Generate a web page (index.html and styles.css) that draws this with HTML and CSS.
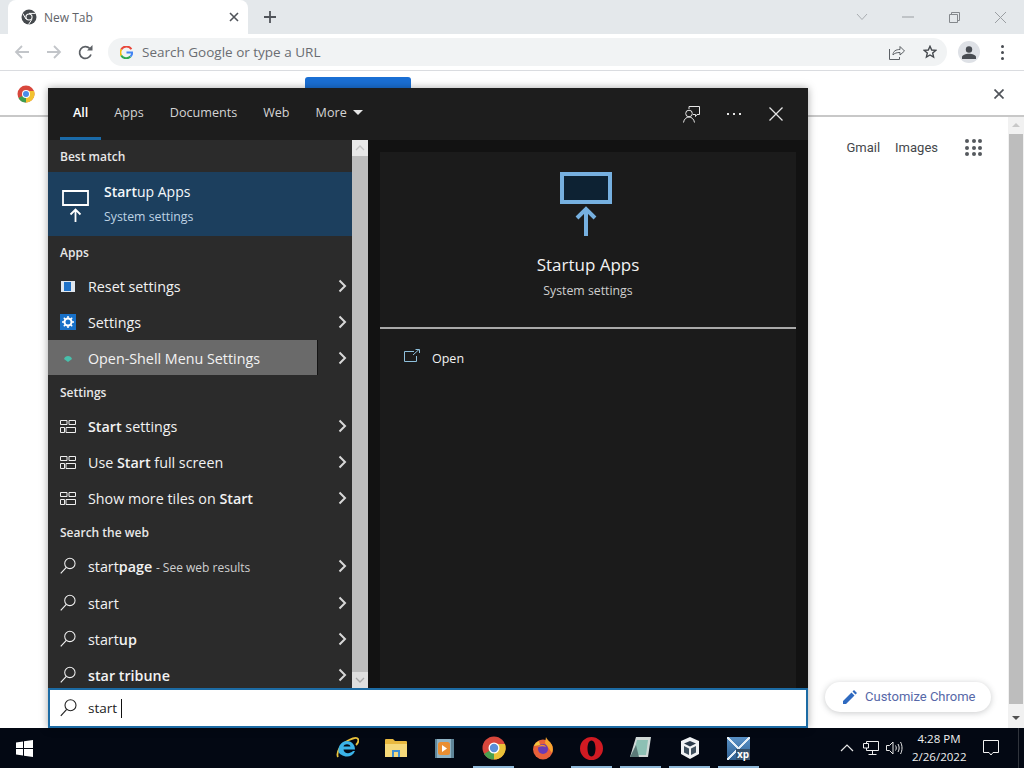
FILE: index.html
```html
<!DOCTYPE html>
<html lang="en">
<head>
    <meta charset="UTF-8">
    <title>New Tab</title>
    <link rel="stylesheet" href="styles.css">
</head>
<body>
    <svg class="defs" width="0" height="0">
        <symbol id="tiles" viewBox="0 0 16 13">
            <path d="M.5.5h6.500v4h-6.500zM9 .5h6.500v4H9zM.5 7.500h4v5h-4zM6 7.500h9.500v5H6z" fill="none" stroke="#eee"/>
        </symbol>
        <symbol id="lens" viewBox="0 0 17 18">
            <circle cx="10.500" cy="6.300" r="5.500" fill="none" stroke="currentColor" stroke-width="1.100"/>
            <path d="M6.700 10.400 .8 16.800" fill="none" stroke="currentColor" stroke-width="1.200"/>
        </symbol>
        <symbol id="chev" viewBox="0 0 9 14">
            <path d="M1.500 1.500 7 7l-5.500 5.500" fill="none" stroke="#d8d8d8" stroke-width="2"/>
        </symbol>
    </svg>

    <div class="tabstrip">
        <div class="tab">
            <svg class="tab-icon" width="16" height="16" viewBox="0 0 16 16">
                <circle cx="8" cy="8" r="7.500" fill="#45494d"/>
                <circle cx="8" cy="8" r="3.600" fill="#fff"/>
                <circle cx="8" cy="8" r="2.500" fill="#45494d"/>
                <path d="M8 4.400h6.500M5 10 1.800 4.500M10.800 10.500 7.500 15.500" stroke="#fff" stroke-width="1"/>
            </svg>
            <span class="tab-title">New Tab</span>
            <svg class="tab-close" width="10" height="10" viewBox="0 0 10 10"><path d="M1 1l8 8M9 1l-8 8" stroke="#50545a" stroke-width="1.600"/></svg>
        </div>
        <svg class="new-tab" width="14" height="14" viewBox="0 0 14 14"><path d="M7 1v12M1 7h12" stroke="#50545a" stroke-width="1.800"/></svg>
        <div class="win-btns">
            <svg width="12" height="8" viewBox="0 0 12 8"><path d="M1 1l5 5.500L11 1" fill="none" stroke="#a9adb1"/></svg>
            <svg class="win-min" width="12" height="2" viewBox="0 0 12 2"><path d="M0 1h12" stroke="#9a9ea2"/></svg>
            <svg class="win-max" width="11" height="11" viewBox="0 0 11 11"><path d="M.5 2.500h8v8h-8zM2.500 2.500v-2h8v8h-2" fill="none" stroke="#84888c"/></svg>
            <svg class="win-x" width="13" height="13" viewBox="0 0 13 13"><path d="M1 1l11 11M12 1 1 12" stroke="#9a9ea2"/></svg>
        </div>
    </div>

    <div class="toolbar">
        <svg class="nav-icon" width="16" height="14" viewBox="0 0 16 14"><path d="M15 7H2M8 1 2 7l6 6" fill="none" stroke="#c2c5c9" stroke-width="1.800"/></svg>
        <svg class="nav-icon" width="16" height="14" viewBox="0 0 16 14"><path d="M1 7h13M8 1l6 6-6 6" fill="none" stroke="#c2c5c9" stroke-width="1.800"/></svg>
        <svg class="nav-icon" width="15" height="15" viewBox="0 0 15 15"><path d="M13 9.500A5.900 5.900 0 1 1 11.700 3.400" fill="none" stroke="#5c6065" stroke-width="1.700"/><path d="M9 5.500h5.500V0z" fill="#5c6065"/></svg>
        <div class="omnibox">
            <svg width="13" height="13" viewBox="0 0 13 13">
                <path d="M11.400 3.200A6 6 0 0 0 1.200 3.500" fill="none" stroke="#e8483b" stroke-width="2"/>
                <path d="M1.200 3.500a6 6 0 0 0 0 6" fill="none" stroke="#f6bb0e" stroke-width="2"/>
                <path d="M1.200 9.500a6 6 0 0 0 9.300 1" fill="none" stroke="#2da94f" stroke-width="2"/>
                <path d="M6.500 6.500h5.800a6 6 0 0 1-1.800 4" fill="none" stroke="#4285f4" stroke-width="2"/>
            </svg>
            <span class="omni-text">Search Google or type a URL</span>
            <svg class="omni-share" width="16" height="15" viewBox="0 0 16 15"><path d="M.5 4v10.500h10V12M4 10c0-4 3-5.500 7-5.500V1.500L15.500 6 11 10V7.500C8 7.500 5.500 8 4 10z" fill="none" stroke="#5c6065"/></svg>
            <svg class="omni-star" width="14" height="14" viewBox="0 0 14 14"><path d="M7 1.300 8.700 5l4 .4-3 2.700.9 4L7 10l-3.600 2.100.9-4-3-2.700 4-.4z" fill="none" stroke="#44484d" stroke-width="1.400"/></svg>
        </div>
        <div class="avatar">
            <svg width="14" height="13" viewBox="0 0 14 13"><circle cx="7" cy="3.500" r="3.200" fill="#484c52"/><path d="M0 13v-2c0-2 3.500-3.300 7-3.300s7 1.300 7 3.300v2z" fill="#484c52"/></svg>
        </div>
        <div class="menu-dots"><i></i><i></i><i></i></div>
    </div>

    <div class="infobar">
        <svg width="18" height="18" viewBox="0 0 18 18">
            <circle cx="9" cy="9" r="8.500" fill="#d8473c"/>
            <path d="M9 9 1.500 13A8.500 8.500 0 0 0 9 17.500z" fill="#3d9d4f"/>
            <path d="M9 9v8.500A8.500 8.500 0 0 0 17 6H9z" fill="#f2c230"/>
            <circle cx="9" cy="9" r="4" fill="#fff"/>
            <circle cx="9" cy="9" r="3" fill="#4a8bea"/>
        </svg>
        <div class="info-btn"></div>
        <svg class="info-close" width="10" height="10" viewBox="0 0 10 10"><path d="M.5.5l9 9M9.500.5l-9 9" stroke="#50545a" stroke-width="1.700"/></svg>
    </div>

    <div class="page">
        <div class="page-main">
            <div class="page-links">
                <span>Gmail</span>
                <span>Images</span>
                <div class="apps-grid"><i></i><i></i><i></i><i></i><i></i><i></i><i></i><i></i><i></i></div>
            </div>
            <div class="customize">
                <svg width="14" height="14" viewBox="0 0 14 14"><path d="M0 14v-3L8.500 2.500l3 3L3 14zM9.500 1.500 11 0l3 3-1.500 1.500z" fill="#2f6ac0"/></svg>
                <span>Customize Chrome</span>
            </div>
        </div>
        <div class="page-scroll">
            <div class="arrow-up"></div>
            <div class="page-thumb"></div>
            <div class="arrow-down"></div>
        </div>
    </div>

    <div class="taskbar">
        <svg class="start-logo" width="17" height="17" viewBox="0 0 17 17"><path d="M0 2.400 7 1.400v6.500H0zM8 1.200 17 0v7.900H8zM0 9h7v6.600L0 14.600zM8 9h9v8l-9-1.200z" fill="#fff"/></svg>
        <div class="task-apps">
            <div class="task-app">
                <svg width="24" height="24" viewBox="0 0 24 24">
                    <path d="M3 21C1 17 5 8 14 4c4-2 8-3 9-1 1 2-1 5-2 6" fill="none" stroke="#e9c23c" stroke-width="1.800"/>
                    <path d="M3.500 13.500C4 8 8 5 12 5s8 3 8 8.500H8.500c.3 4 6 5 9.500 1.500h2c-2 5-7 6.500-11 5S3 17 3.500 13.500zM8.500 10.500h7c-.5-3-6.500-3-7 0z" fill="#3bb3e8" fill-rule="evenodd"/>
                </svg>
            </div>
            <div class="task-app">
                <svg width="22" height="20" viewBox="0 0 22 20">
                    <path d="M1 1h7l2 2h11a1 1 0 0 1 1 1v3H0V2a1 1 0 0 1 1-1z" fill="#e9b93f"/>
                    <path d="M0 6h22v13H0z" fill="#f6d97a"/>
                    <path d="M7 12h8v7H7z" fill="#3f8fd0"/>
                    <path d="M9 14h4v5H9z" fill="#f6d97a"/>
                </svg>
            </div>
            <div class="task-app">
                <svg width="19" height="19" viewBox="0 0 19 19">
                    <path d="M0 0h19v19H0z" fill="#8eb2c4"/>
                    <path d="M0 0h2v19H0zM16 0h3v19h-3z" fill="#5f8598"/>
                    <rect x="3" y="3" width="12" height="13" rx="2.500" fill="#e98e32"/>
                    <path d="M7 6l5 3.500L7 13z" fill="#fff"/>
                </svg>
            </div>
            <div class="task-app running">
                <svg width="24" height="24" viewBox="0 0 24 24">
                    <circle cx="12" cy="12" r="11.500" fill="#d8473c"/>
                    <path d="M12 12 2 18a11.500 11.500 0 0 0 10 5.500z" fill="#48a04f"/>
                    <path d="M12 12v11.500A11.500 11.500 0 0 0 23 8H12z" fill="#eac138"/>
                    <circle cx="12" cy="12" r="5.500" fill="#fff"/>
                    <circle cx="12" cy="12" r="4.200" fill="#5a8fd8"/>
                </svg>
            </div>
            <div class="task-app">
                <svg width="24" height="24" viewBox="0 0 24 24">
                    <circle cx="12" cy="13.500" r="10" fill="#e8603a"/>
                    <path d="M15 1c1 3 4 4 6 8 1 3 1 6 0 8L14 7z" fill="#f7a52f"/>
                    <path d="M3 10c1-3 3-4 5-5l1 4z" fill="#f3c53c"/>
                    <circle cx="12" cy="13" r="5" fill="#6a3bb5"/>
                    <path d="M7 11c2-3 7-3 8 0-2-1-5-1-8 0z" fill="#f2902f"/>
                </svg>
            </div>
            <div class="task-app running">
                <svg width="23" height="23" viewBox="0 0 23 23">
                    <path d="M11.500 0a11.500 11.500 0 1 0 0 23 11.500 11.500 0 0 0 0-23zM11.500 3.500c2.600 0 4 3.600 4 8s-1.400 8-4 8-4-3.600-4-8 1.400-8 4-8z" fill="#d01a22" fill-rule="evenodd"/>
                </svg>
            </div>
            <div class="task-app running">
                <svg width="23" height="24" viewBox="0 0 23 24">
                    <path d="M7 1h15l-3 20H1z" fill="#cfd8d6"/>
                    <path d="M8 4h11l-2 15H4z" fill="#8dc0b4"/>
                    <path d="M1 21 7 9l3 12z" fill="#5a7a78"/>
                </svg>
            </div>
            <div class="task-app running">
                <svg width="22" height="24" viewBox="0 0 22 24">
                    <path d="M11 1 20 5v13l-9 5-9-5V5z" fill="#f0f2f4"/>
                    <path d="M11 5l6 2.500-6 3-6-3z" fill="#2b3a4a"/>
                    <path d="M5 10l5 2.500V19l-5-2.500zM17 10l-5 2.500V19l5-2.500z" fill="#40505e"/>
                </svg>
            </div>
            <div class="task-app running">
                <div class="xp-tile"><span>xp</span></div>
            </div>
        </div>
        <div class="tray">
            <svg width="14" height="8" viewBox="0 0 14 8"><path d="M1 7l6-6 6 6" fill="none" stroke="#e8e8e8" stroke-width="1.200"/></svg>
            <svg class="tray-net" width="16" height="14" viewBox="0 0 16 14"><path d="M3.500 2.500V.5h12v9h-12V7M.5 2.500h5v4.500h-5zM9.500 9.500v4M5.500 13.500h8" fill="none" stroke="#eee"/></svg>
            <svg class="tray-vol" width="17" height="14" viewBox="0 0 17 14"><path d="M.5 4.500h3L7 1v12L3.500 9.500h-3zM9.500 4.500c1 1.500 1 3.500 0 5M12 3c1.500 2.500 1.500 5.500 0 8M14.500 1c2 3.500 2 8.500 0 12" fill="none" stroke="#e8e8e8"/></svg>
            <div class="clock">
                <div>4:28 PM</div>
                <div>2/26/2022</div>
            </div>
            <svg class="tray-note" width="16" height="16" viewBox="0 0 16 16"><path d="M.5.500h15v12H10L8 15l-2-2.500H.5z" fill="none" stroke="#f2f2f2"/></svg>
        </div>
        <div class="show-desktop"></div>
    </div>

    <div class="search-win">
        <div class="search-head">
            <div class="search-tab active">All</div>
            <div class="search-tab">Apps</div>
            <div class="search-tab">Documents</div>
            <div class="search-tab">Web</div>
            <div class="search-tab">More <span class="caret"></span></div>
            <div class="head-icons">
                <svg width="17" height="17" viewBox="0 0 17 17"><path d="M6 3V.5h10.500v8H14l-1.500 2V8.500H10" fill="none" stroke="#e6e6e6"/><circle cx="6" cy="7.500" r="3.300" fill="none" stroke="#e6e6e6"/><path d="M.5 16.500c.5-3.500 3-5.500 5.500-5.500s5 2 5.500 5.500" fill="none" stroke="#e6e6e6"/></svg>
                <div class="more-dots"><i></i><i></i><i></i></div>
                <svg width="14" height="14" viewBox="0 0 14 14"><path d="M.5.5l13 13M13.500.5l-13 13" stroke="#e6e6e6" stroke-width="1.300"/></svg>
            </div>
        </div>
        <div class="search-body">
            <div class="results">
                <div class="group-title">Best match</div>
                <div class="best">
                    <svg width="27" height="33" viewBox="0 0 27 33"><path d="M1 1h25v14H1z" fill="none" stroke="#fff" stroke-width="1.800"/><path d="M13.500 32V20M8.500 24.500l5-5 5 5" fill="none" stroke="#fff" stroke-width="1.800"/></svg>
                    <div>
                        <div class="best-name"><b>Start</b>up Apps</div>
                        <div class="best-sub">System settings</div>
                    </div>
                </div>

                <div class="group-title">Apps</div>
                <div class="row">
                    <svg class="row-icon" width="14" height="11" viewBox="0 0 14 11"><path d="M0 0h14v11H0z" fill="#dfe6ee"/><path d="M3 1h7v9H3z" fill="#1f72c8"/></svg>
                    <span class="row-text">Reset settings</span>
                    <svg class="row-chev"><use href="#chev"/></svg>
                </div>
                <div class="row">
                    <svg class="row-icon" width="16" height="16" viewBox="0 0 16 16"><path d="M0 0h16v16H0z" fill="#1871c9"/><circle cx="8" cy="8" r="3.500" fill="none" stroke="#fff" stroke-width="2"/><path d="M8 2v2.500M8 11.500V14M2 8h2.500M11.500 8H14M3.800 3.800l1.700 1.700M10.500 10.500l1.700 1.700M12.200 3.800l-1.700 1.700M5.500 10.500l-1.700 1.700" stroke="#fff" stroke-width="1.500"/></svg>
                    <span class="row-text">Settings</span>
                    <svg class="row-chev"><use href="#chev"/></svg>
                </div>
                <div class="row row-hover">
                    <div class="hover-main">
                        <svg class="row-icon" width="16" height="10" viewBox="0 0 16 10"><path d="M4 6c1-4 7-4 8 0L8 9z" fill="#48c0ac"/></svg>
                        <span class="row-text">Open-Shell Menu Settings</span>
                    </div>
                    <svg class="row-chev"><use href="#chev"/></svg>
                </div>

                <div class="group-title">Settings</div>
                <div class="row">
                    <svg class="row-icon" width="16" height="13"><use href="#tiles"/></svg>
                    <span class="row-text"><b>Start</b> settings</span>
                    <svg class="row-chev"><use href="#chev"/></svg>
                </div>
                <div class="row">
                    <svg class="row-icon" width="16" height="13"><use href="#tiles"/></svg>
                    <span class="row-text">Use <b>Start</b> full screen</span>
                    <svg class="row-chev"><use href="#chev"/></svg>
                </div>
                <div class="row">
                    <svg class="row-icon" width="16" height="13"><use href="#tiles"/></svg>
                    <span class="row-text">Show more tiles on <b>Start</b></span>
                    <svg class="row-chev"><use href="#chev"/></svg>
                </div>

                <div class="group-title">Search the web</div>
                <div class="row">
                    <svg class="row-icon lens" width="17" height="18"><use href="#lens"/></svg>
                    <span class="row-text">start<b>page</b> <small>- See web results</small></span>
                    <svg class="row-chev"><use href="#chev"/></svg>
                </div>
                <div class="row row-tall">
                    <svg class="row-icon lens" width="17" height="18"><use href="#lens"/></svg>
                    <span class="row-text">start</span>
                    <svg class="row-chev"><use href="#chev"/></svg>
                </div>
                <div class="row">
                    <svg class="row-icon lens" width="17" height="18"><use href="#lens"/></svg>
                    <span class="row-text">start<b>up</b></span>
                    <svg class="row-chev"><use href="#chev"/></svg>
                </div>
                <div class="row row-cut">
                    <svg class="row-icon lens" width="17" height="18"><use href="#lens"/></svg>
                    <span class="row-text"><b>star tribune</b></span>
                    <svg class="row-chev"><use href="#chev"/></svg>
                </div>
            </div>
            <div class="results-scroll">
                <div class="rs-btn rs-up"><svg width="10" height="6" viewBox="0 0 10 6"><path d="M1 5l4-4 4 4" fill="none" stroke="#c4c4c4" stroke-width="1.300"/></svg></div>
                <div class="rs-thumb"></div>
                <div class="rs-btn"><svg width="10" height="6" viewBox="0 0 10 6"><path d="M1 1l4 4 4-4" fill="none" stroke="#a8a8a8" stroke-width="1.300"/></svg></div>
            </div>
            <div class="preview">
                <svg class="preview-icon" width="52" height="64" viewBox="0 0 52 64">
                    <path d="M2 2h48v28H2z" fill="#0d2233" stroke="#76b0e0" stroke-width="4"/>
                    <path d="M26 64V37M17 46l9-9 9 9" fill="none" stroke="#76b0e0" stroke-width="4"/>
                </svg>
                <div class="preview-name">Startup Apps</div>
                <div class="preview-sub">System settings</div>
                <div class="preview-line"></div>
                <div class="preview-open">
                    <svg width="16" height="13" viewBox="0 0 16 13"><path d="M10 2.500H.5v10h12V7" fill="none" stroke="#8fc0dc"/><path d="M9 6l6-5.500M11.500.5H15.500V4" fill="none" stroke="#8fc0dc"/></svg>
                    <span>Open</span>
                </div>
            </div>
        </div>
        <div class="search-box">
            <svg class="lens-dark" width="17" height="18"><use href="#lens"/></svg>
            <span class="query">start</span>
            <span class="cursor"></span>
        </div>
    </div>
</body>
</html>
```

FILE: styles.css
```css
*{
    box-sizing: border-box;
}
html, body{
    margin: 0;
    height: 100%;
}
body{
    width: 1024px;
    height: 768px;
    overflow: hidden;
    display: flex;
    flex-direction: column;
    position: relative;
    background: #fff;
    font-family: "Open Sans", "Noto Sans", sans-serif;
    color: #202124;
}
.defs{
    position: absolute;
}
svg{
    display: block;
    flex: none;
}

/* chrome tab strip */
.tabstrip{
    height: 34px;
    background: #e4e8eb;
    display: flex;
    align-items: center;
    padding-left: 8px;
}
.tab{
    width: 240px;
    height: 34px;
    background: #fff;
    border-radius: 8px 8px 0 0;
    display: flex;
    align-items: center;
    padding: 0 9px 0 13px;
}
.tab-title{
    margin-left: 7px;
    flex: 1;
    font-size: 12px;
    color: #5f6368;
}
.new-tab{
    margin-left: 15px;
}
.win-btns{
    margin-left: auto;
    display: flex;
    align-items: center;
    padding-right: 17px;
    height: 28px;
}
.win-min{
    margin-left: 34px;
}
.win-max{
    margin-left: 35px;
}
.win-x{
    margin-left: 34px;
}

/* toolbar */
.toolbar{
    height: 37px;
    background: #fff;
    border-bottom: 1px solid #dadce0;
    display: flex;
    align-items: center;
    padding-left: 14px;
}
.nav-icon{
    margin-right: 16px;
}
.nav-icon:nth-child(3){
    margin-right: 15px;
}
.omnibox{
    width: 839px;
    height: 28px;
    background: #f1f3f4;
    border-radius: 14px;
    display: flex;
    align-items: center;
    padding: 0 10px 0 12px;
}
.omni-text{
    margin-left: 9px;
    flex: 1;
    font-size: 13.500px;
    color: #6a6d72;
}
.omni-star{
    margin-left: 18px;
}
.avatar{
    width: 22px;
    height: 22px;
    margin-left: 11px;
    border-radius: 50%;
    background: #dee1e6;
    display: flex;
    align-items: center;
    justify-content: center;
}
.menu-dots{
    margin-left: 21px;
    display: flex;
    flex-direction: column;
    gap: 3px;
}
.menu-dots i{
    width: 3px;
    height: 3px;
    border-radius: 50%;
    background: #484c52;
}

/* infobar */
.infobar{
    height: 46px;
    background: #fff;
    border-bottom: 2px solid #c8c8c8;
    display: flex;
    align-items: flex-start;
    padding: 14px 20px 0 17px;
}
.info-btn{
    width: 106px;
    height: 14px;
    margin: -8px 0 0 270px;
    background: #1a6fd4;
    border-radius: 3px 3px 0 0;
}
.info-close{
    margin-left: auto;
    margin-top: 4px;
}

/* new tab page */
.page{
    flex: 1;
    display: flex;
    background: #fff;
}
.page-main{
    flex: 1;
    display: flex;
    flex-direction: column;
    padding: 0 17px 16px 0;
}
.page-links{
    display: flex;
    justify-content: flex-end;
    align-items: center;
    gap: 15px;
    padding: 22px 9px 0 0;
    font-family: Roboto, sans-serif;
    font-size: 13px;
    color: #44474b;
}
.apps-grid{
    display: grid;
    grid-template-columns: repeat(3, 4px);
    gap: 2.500px;
    margin-left: 12px;
}
.apps-grid i{
    width: 4px;
    height: 4px;
    border-radius: 50%;
    background: #55595e;
}
.customize{
    margin-top: auto;
    align-self: flex-end;
    width: 166px;
    height: 30px;
    padding: 0 0 1px 18px;
    border-radius: 15px;
    background: #fff;
    box-shadow: 0 1px 6px rgba(60, 64, 67, .28);
    display: flex;
    align-items: center;
    gap: 8px;
    font-family: Roboto, sans-serif;
    font-size: 13px;
    color: #5668a8;
}
.page-scroll{
    width: 16px;
    background: #f1f1f1;
    display: flex;
    flex-direction: column;
    align-items: center;
}
.page-thumb{
    width: 14px;
    height: 570px;
    background: #bdbdbd;
}
.arrow-up{
    width: 0;
    height: 0;
    margin: 6px 0 7px;
    border: 4px solid transparent;
    border-top: 0;
    border-bottom: 4px solid #c8c8c8;
}
.arrow-down{
    width: 0;
    height: 0;
    margin-top: 12px;
    border: 4px solid transparent;
    border-bottom: 0;
    border-top: 4px solid #505050;
}

/* taskbar */
.taskbar{
    height: 40px;
    background: #030813;
    display: flex;
    align-items: center;
    color: #f0f0f0;
    padding-left: 16px;
}
.task-apps{
    display: flex;
    margin-left: 289px;
    height: 40px;
}
.task-app{
    width: 41px;
    height: 40px;
    margin: 0 4px;
    display: flex;
    align-items: center;
    justify-content: center;
    border-bottom: 2px solid transparent;
    padding-top: 2px;
}
.task-app.running{
    border-bottom-color: #8fb8d8;
}
.xp-tile{
    width: 23px;
    height: 23px;
    background:
        linear-gradient(45deg, transparent 46%, #e4eef6 46% 54%, transparent 54%),
        linear-gradient(135deg, transparent 46%, #e4eef6 46% 54%, transparent 54%),
        linear-gradient(#5a92c8, #2f5f90);
    position: relative;
}
.xp-tile span{
    position: absolute;
    right: 0;
    bottom: 0;
    padding: 0 1px;
    background: #35506a;
    font-size: 10px;
    line-height: 11px;
    font-weight: 700;
    color: #fff;
}
.tray{
    display: flex;
    align-items: center;
    margin-left: auto;
}
.tray-net{
    margin-left: 9px;
}
.tray-vol{
    margin-left: 7px;
}
.clock{
    margin-left: 9px;
    width: 54px;
    font-size: 11.500px;
    line-height: 18px;
    text-align: center;
    white-space: nowrap;
}
.tray-note{
    margin-left: 17px;
}
.show-desktop{
    width: 1px;
    height: 40px;
    margin-left: 19px;
    margin-right: 5px;
    background: #30343c;
}

/* search window, floats above the browser */
.search-win{
    position: absolute;
    left: 48px;
    top: 88px;
    width: 760px;
    height: 640px;
    background: #121212;
    display: flex;
    flex-direction: column;
    box-shadow: 0 0 8px rgba(0, 0, 0, .35);
}
.search-head{
    height: 52px;
    background: #1d1d1d;
    display: flex;
    align-items: stretch;
    padding-left: 12px;
}
.search-tab{
    padding: 0 13px;
    display: flex;
    align-items: center;
    font-size: 12.600px;
    color: #d4d4d4;
    border-bottom: 3px solid transparent;
}
.search-tab.active{
    color: #fff;
    font-weight: 600;
    border-bottom-color: #1a6aa8;
}
.caret{
    width: 0;
    height: 0;
    margin-left: 6px;
    border: 5px solid transparent;
    border-bottom: 0;
    border-top: 5px solid #e6e6e6;
}
.head-icons{
    margin-left: auto;
    display: flex;
    align-items: center;
    padding-right: 25px;
}
.more-dots{
    margin: 0 28px 0 27px;
    display: flex;
    gap: 4px;
}
.more-dots i{
    width: 2px;
    height: 2px;
    background: #e6e6e6;
}
.search-body{
    flex: 1;
    display: flex;
    min-height: 0;
}
.results{
    width: 304px;
    background: #2b2b2b;
    color: #f2f2f2;
    overflow: hidden;
}
.group-title{
    height: 32px;
    padding: 8px 0 0 12px;
    font-size: 12px;
    line-height: 18px;
    font-weight: 600;
    color: #e8e8e8;
}
.best{
    height: 64px;
    background: #1c3f5e;
    display: flex;
    align-items: center;
    gap: 15px;
    padding: 0 0 0 14px;
}
.best svg{
    margin-top: 4px;
}
.best-name{
    font-size: 14px;
    line-height: 20px;
    color: #f4f8fb;
}
.best-name b{
    font-weight: 600;
}
.best-sub{
    margin-top: 6px;
    font-size: 12.300px;
    line-height: 18px;
    color: #bed3e4;
}
.row{
    height: 36px;
    display: flex;
    align-items: center;
    padding-left: 12px;
}
.row-icon{
    width: 16px;
}
.row-text{
    flex: 1;
    margin-left: 12px;
    font-size: 14.300px;
    white-space: nowrap;
}
.row-text b{
    font-weight: 600;
}
.row-text small{
    font-size: 12px;
    color: #d0d0d0;
}
.row-chev{
    width: 9px;
    height: 14px;
    margin-right: 5px;
}
.row-tall{
    height: 37px;
    padding-top: 1px;
}
.row-cut{
    height: 30px;
    padding-top: 6px;
}
.row-hover{
    padding-left: 0;
}
.hover-main{
    width: 270px;
    height: 35px;
    margin-right: 20px;
    align-self: flex-start;
    padding: 1px 0 0 12px;
    flex: none;
    background: #6a6a6a;
    border-right: 1px solid #141414;
    display: flex;
    align-items: center;
}
.results-scroll{
    width: 16px;
    background: #bdbdbd;
    display: flex;
    flex-direction: column;
}
.rs-btn{
    height: 16px;
    background: #dedede;
    display: flex;
    align-items: center;
    justify-content: center;
}
.rs-up{
    background: #e8e8e8;
}
.rs-thumb{
    flex: 1;
}
.preview{
    width: 416px;
    margin: 12px 12px 0;
    background: #1b1b1b;
    display: flex;
    flex-direction: column;
    align-items: center;
    color: #f2f2f2;
}
.preview-icon{
    margin: 20px 4px 0 0;
}
.preview-name{
    margin-top: 18px;
    font-size: 17px;
    line-height: 22px;
}
.preview-sub{
    margin-top: 6px;
    font-size: 12.300px;
    line-height: 18px;
    color: #cfcfcf;
}
.preview-line{
    width: 100%;
    height: 2px;
    margin-top: 27px;
    background: #a9a9a9;
}
.preview-open{
    width: 100%;
    margin-top: 21px;
    padding-left: 24px;
    display: flex;
    align-items: center;
    gap: 12px;
    font-size: 12.500px;
    line-height: 18px;
}
.preview-open svg{
    margin-top: -7px;
}
.search-box{
    height: 40px;
    background: #fff;
    border: 2px solid #1c6ba4;
    display: flex;
    align-items: center;
    padding-left: 10px;
    color: #222;
}
.query{
    margin-left: 11px;
    font-size: 13.500px;
}
.cursor{
    width: 1px;
    height: 19px;
    margin-left: 4px;
    background: #111;
}
```
